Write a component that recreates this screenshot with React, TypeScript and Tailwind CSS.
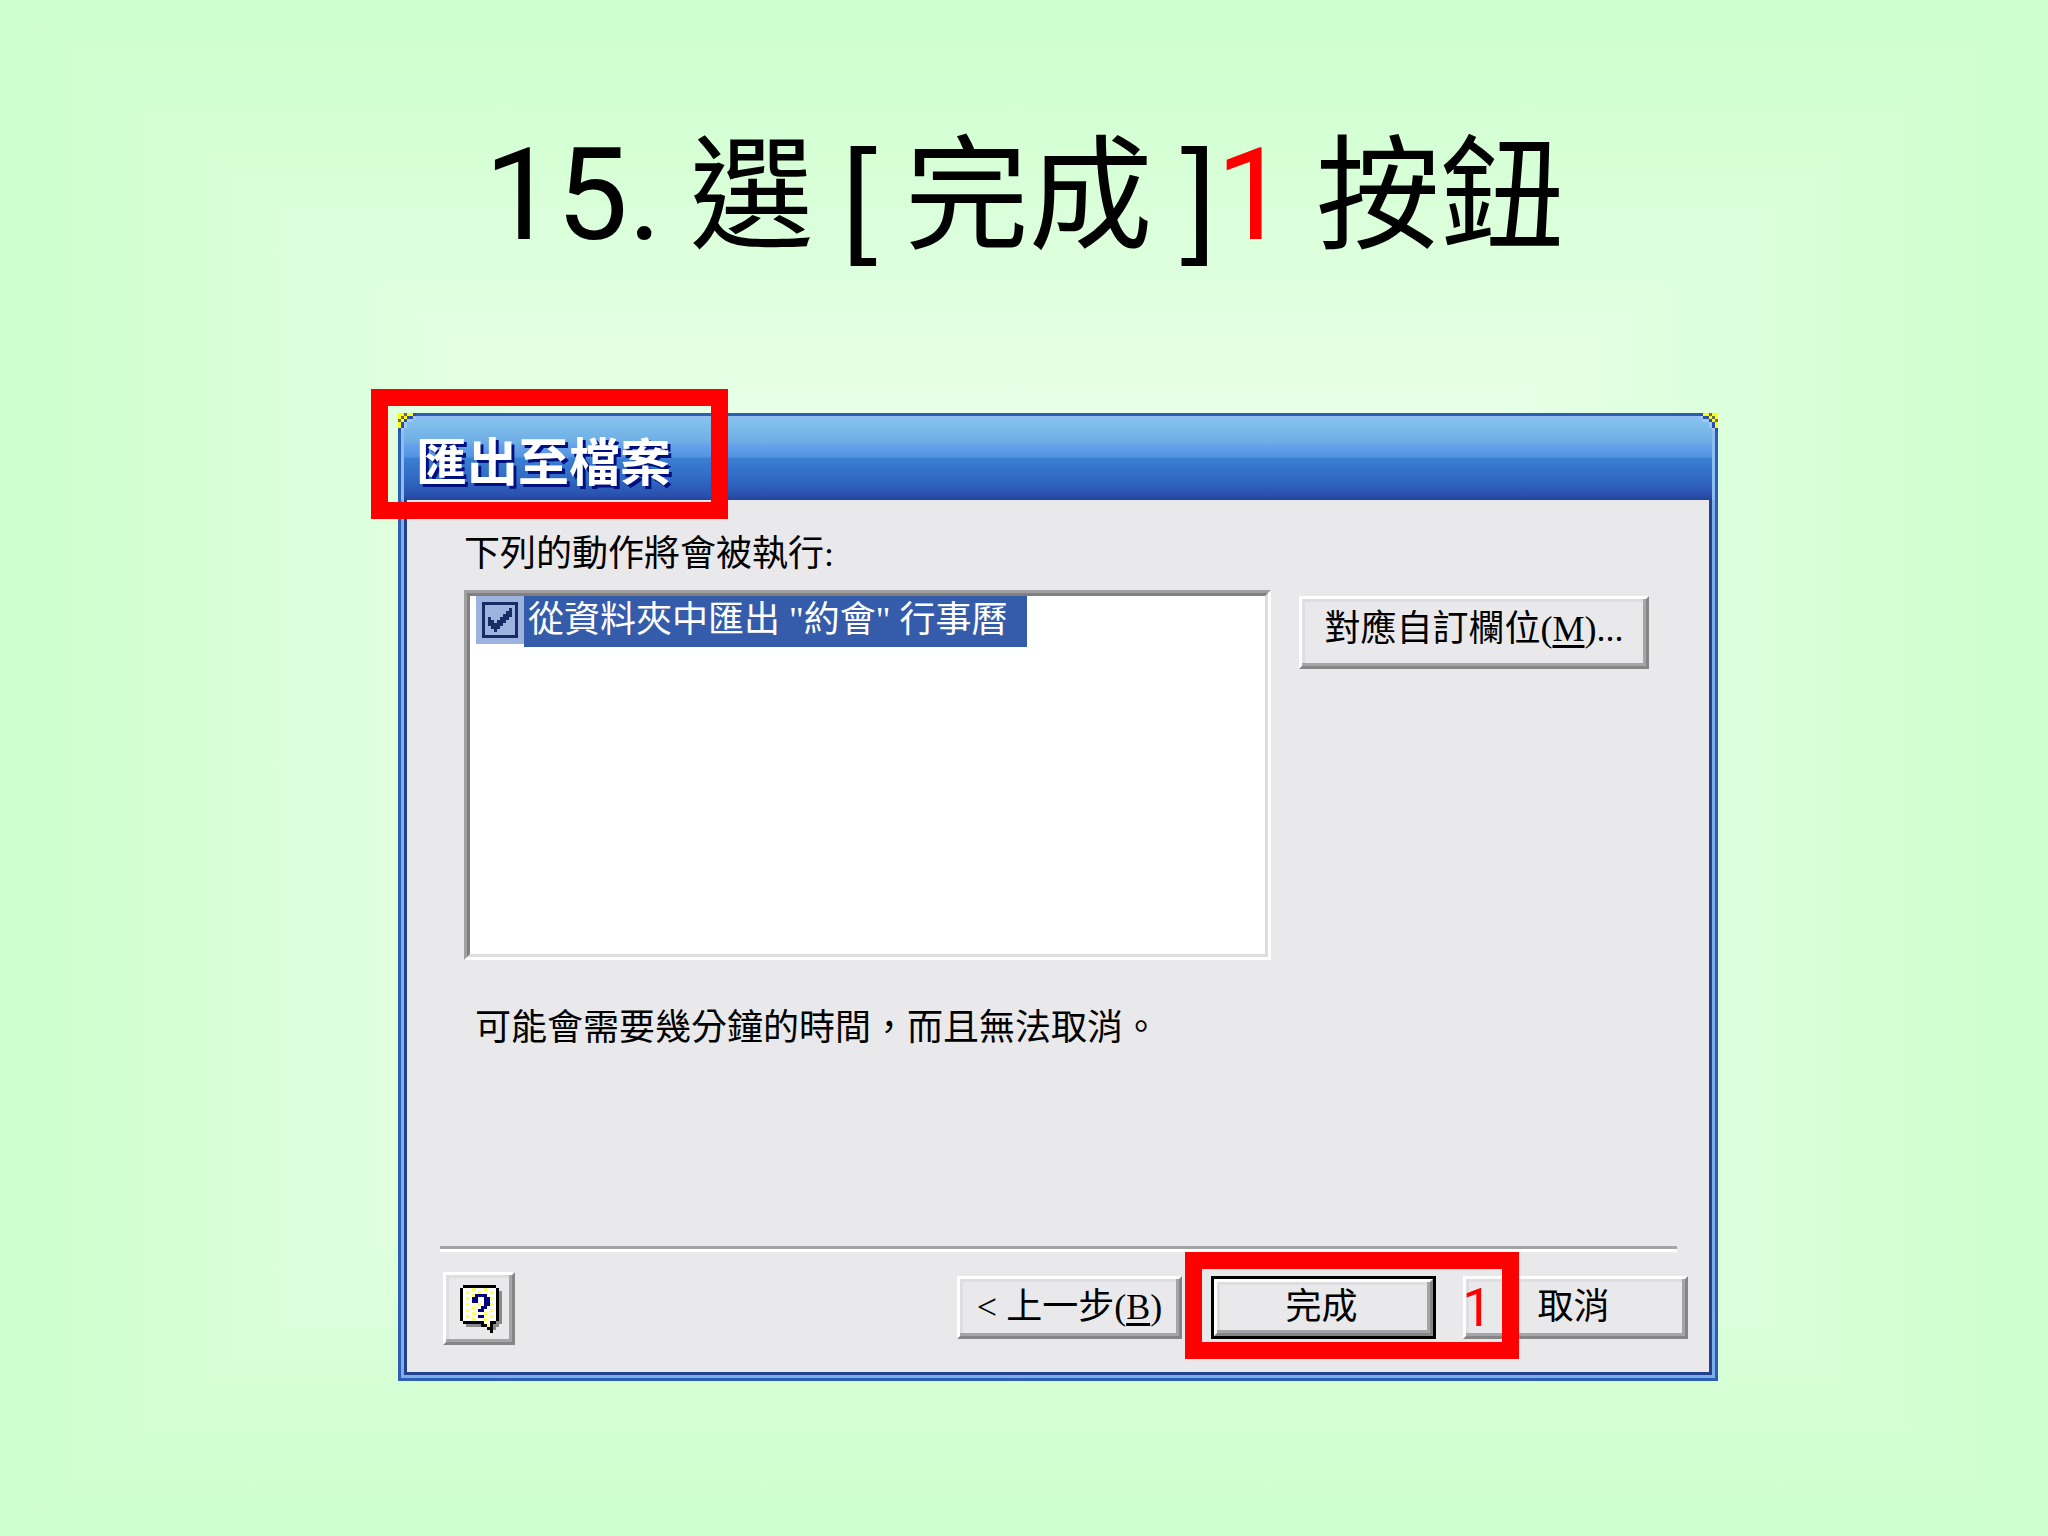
import type { ReactNode } from 'react';

const palette: Record<string, string> = {
  k: '#000000',
  g: '#8a8a8a',
  w: '#ffffff',
  y: '#ffff55',
  n: '#000080',
  Y: '#ffff00',
  o: '#6a6a5a',
  B: '#2a4fa8',
  l: '#a3c6f5',
  d: '#162d66',
};

const helpIcon = [
  '.kkkkkkkkkkk..',
  'kwwwywwwywwwk.',
  'kwywwwywwwywkg',
  'kwwwynnnnwwwkg',
  'kwywnnwwnnywkg',
  'kwwwnnwwnnwwkg',
  'kwywwwywnnywkg',
  'kwwwywwnnwwwkg',
  'kwywwwnnwwywkg',
  'kwwwywwwywwwkg',
  'kwywwwnnwwywkg',
  'kwwwywwwywwwkg',
  '.kkkkkkkwwkkgg',
  '..gggggkkykgg.',
  '.........kkg..',
  '..........k...',
];

const checkIcon = [
  '.......d',
  '......dd',
  '.....ddd',
  'd...ddd.',
  'dd.ddd..',
  'ddddd...',
  '.ddd....',
  '..d.....',
];

const cornerIcon = [
  'YYoYYB',
  'YoYBBl',
  'oYBll.',
  'YBl...',
  'YBl...',
  'Bl....',
];

function PixelArt({ rows, className }: { rows: string[]; className: string }) {
  return (
    <svg className={className} viewBox={`0 0 ${rows[0].length} ${rows.length}`} shapeRendering="crispEdges" aria-hidden="true">
      {rows.flatMap((row, y) =>
        row.split('').map((c, x) =>
          c === '.' ? null : <rect key={`${x}-${y}`} x={x} y={y} width="1" height="1" fill={palette[c]} />
        )
      )}
    </svg>
  );
}

function ClassicButton({ children, className, label }: { children: ReactNode; className: string; label?: string }) {
  return (
    <button
      type="button"
      aria-label={label}
      className={`flex items-center justify-center whitespace-nowrap bg-[#e9e8ea] border-3 border-t-white border-l-white border-r-[#868686] border-b-[#868686] ${className}`}
    >
      {children}
    </button>
  );
}

const bevel = 'shadow-[inset_-3px_-3px_0_#a5a5a7,inset_3px_3px_0_#dedee0]';

export default function App() {
  return (
    <main
      lang="zh-Hant"
      className="min-h-screen pt-[113px] pb-[155px] bg-[linear-gradient(to_right,#ccffcc,#ffffff,#ccffcc),linear-gradient(to_bottom,#ccffcc,#ffffff,#ccffcc)] bg-blend-darken"
    >
      <h1 className="h-[144px] text-center text-[128px] leading-[144px] text-black whitespace-pre font-['Liberation_Sans','Noto_Sans_CJK_TC',sans-serif]">
        <span className="font-['Roboto',sans-serif]">15.</span>
        <span className="text-[124px] font-['Noto_Sans_CJK_TC',sans-serif]"> 選 </span>[
        <span className="text-[124px] font-['Noto_Sans_CJK_TC',sans-serif]"> 完成 </span>]
        <span className="text-[#ff0000] font-['Roboto',sans-serif]">1</span>
        <span className="text-[124px] font-['Noto_Sans_CJK_TC',sans-serif]"> 按鈕</span>
      </h1>

      {/* Dialog */}
      <div className="mt-[156px] pl-[68px] flex justify-center">
        <section className="w-full max-w-[1320px] border-3 border-[#2c5fb3] bg-[#e9e8ea] font-['Liberation_Serif','Noto_Sans_CJK_TC',serif] text-[36px] leading-[48px] text-black">
          {/* Title bar */}
          <header className="relative h-[84px] border-t-3 border-x-3 border-[#8fbdf0] flex items-center pl-[12px] pt-[8px] bg-[linear-gradient(to_bottom,#84c3ee_0%,#6fade4_28%,#66a3ea_32%,#5594e4_46%,#3a7fd2_49%,#3068c2_75%,#2a51ae_94%,#234494_100%)]">
            <PixelArt rows={cornerIcon} className="absolute -top-[6px] -left-[6px] w-[18px] h-[18px]" />
            <PixelArt rows={cornerIcon} className="absolute -top-[6px] -right-[6px] w-[18px] h-[18px] -scale-x-100" />
            <h2 className="text-[51px] leading-[60px] font-bold text-white [text-shadow:3px_3px_0_#001080]">匯出至檔案</h2>
            <div className="absolute -left-[33px] -top-[30px] w-[357px] h-[130px] border-[17px] border-[#ff0000] pointer-events-none" />
          </header>

          <div className="border-3 border-t-0 border-[#7fadea]">
            <div className="border-3 border-t-0 border-[#22408c] pt-[30px] pb-[27px]">
              <div className="pl-[57px] pr-[60px] flex items-start justify-between">
                <div className="w-[807px]">
                  <p>下列的動作將會被執行:</p>
                  <div className="mt-[12px] h-[370px] border-3 border-t-[#a0a0a0] border-l-[#a0a0a0] border-r-white border-b-white">
                    <div className="h-full border-3 border-t-[#808080] border-l-[#808080] border-r-[#dedee0] border-b-[#dedee0] bg-white pl-[6px] flex items-start">
                      <span className="relative w-[48px] h-[48px] bg-[#9db2de] flex items-center justify-center">
                        <input
                          id="export-calendar"
                          type="checkbox"
                          defaultChecked
                          className="appearance-none w-[36px] h-[36px] border-3 border-[#162d66]"
                        />
                        <PixelArt rows={checkIcon} className="absolute top-[12px] left-[12px] w-[24px] h-[24px] pointer-events-none" />
                      </span>
                      <label htmlFor="export-calendar" className="h-[51px] w-[503px] pl-[4px] bg-[#345caa] text-white whitespace-nowrap">
                        從資料夾中匯出 "約會" 行事曆
                      </label>
                    </div>
                  </div>
                </div>

                <ClassicButton className={`mt-[66px] w-[350px] h-[73px] pb-[8px] ${bevel}`}>
                  對應自訂欄位(<u className="underline-offset-4 decoration-3">M</u>)...
                </ClassicButton>
              </div>

              <p className="mt-[44px] pl-[68px]">可能會需要幾分鐘的時間，而且無法取消。</p>

              {/* Footer */}
              <hr className="mt-[194px] ml-[33px] mr-[32px] h-[6px] border-0 border-t-3 border-[#a3a3a5] bg-white" />
              <div className="mt-[20px] pl-[36px] pr-[21px] flex items-start justify-between">
                <ClassicButton label="說明" className={`w-[72px] h-[73px] pl-[4px] ${bevel}`}>
                  <PixelArt rows={helpIcon} className="w-[42px] h-[48px]" />
                </ClassicButton>

                <div className="relative mt-[4px] flex items-start">
                  <ClassicButton className={`w-[225px] h-[63px] pb-[2px] ${bevel}`}>
                    &lt; 上一步(<u className="underline-offset-4 decoration-3">B</u>)
                  </ClassicButton>
                  <div className="ml-[29px] border-3 border-black">
                    <ClassicButton className={`w-[219px] h-[57px] pr-[4px] pb-[2px] ${bevel}`}>完成</ClassicButton>
                  </div>
                  <ClassicButton className={`ml-[27px] w-[225px] h-[63px] pr-[4px] pb-[2px] ${bevel}`}>取消</ClassicButton>

                  <div className="absolute left-[228px] -top-[24px] w-[334px] h-[107px] border-[17px] border-[#ff0000] pointer-events-none flex items-center justify-end">
                    <span className="pt-[4px] pr-[10px] text-[53px] leading-[60px] text-[#ff0000] font-['Roboto',sans-serif]">1</span>
                  </div>
                </div>
              </div>
            </div>
          </div>
        </section>
      </div>
    </main>
  );
}
